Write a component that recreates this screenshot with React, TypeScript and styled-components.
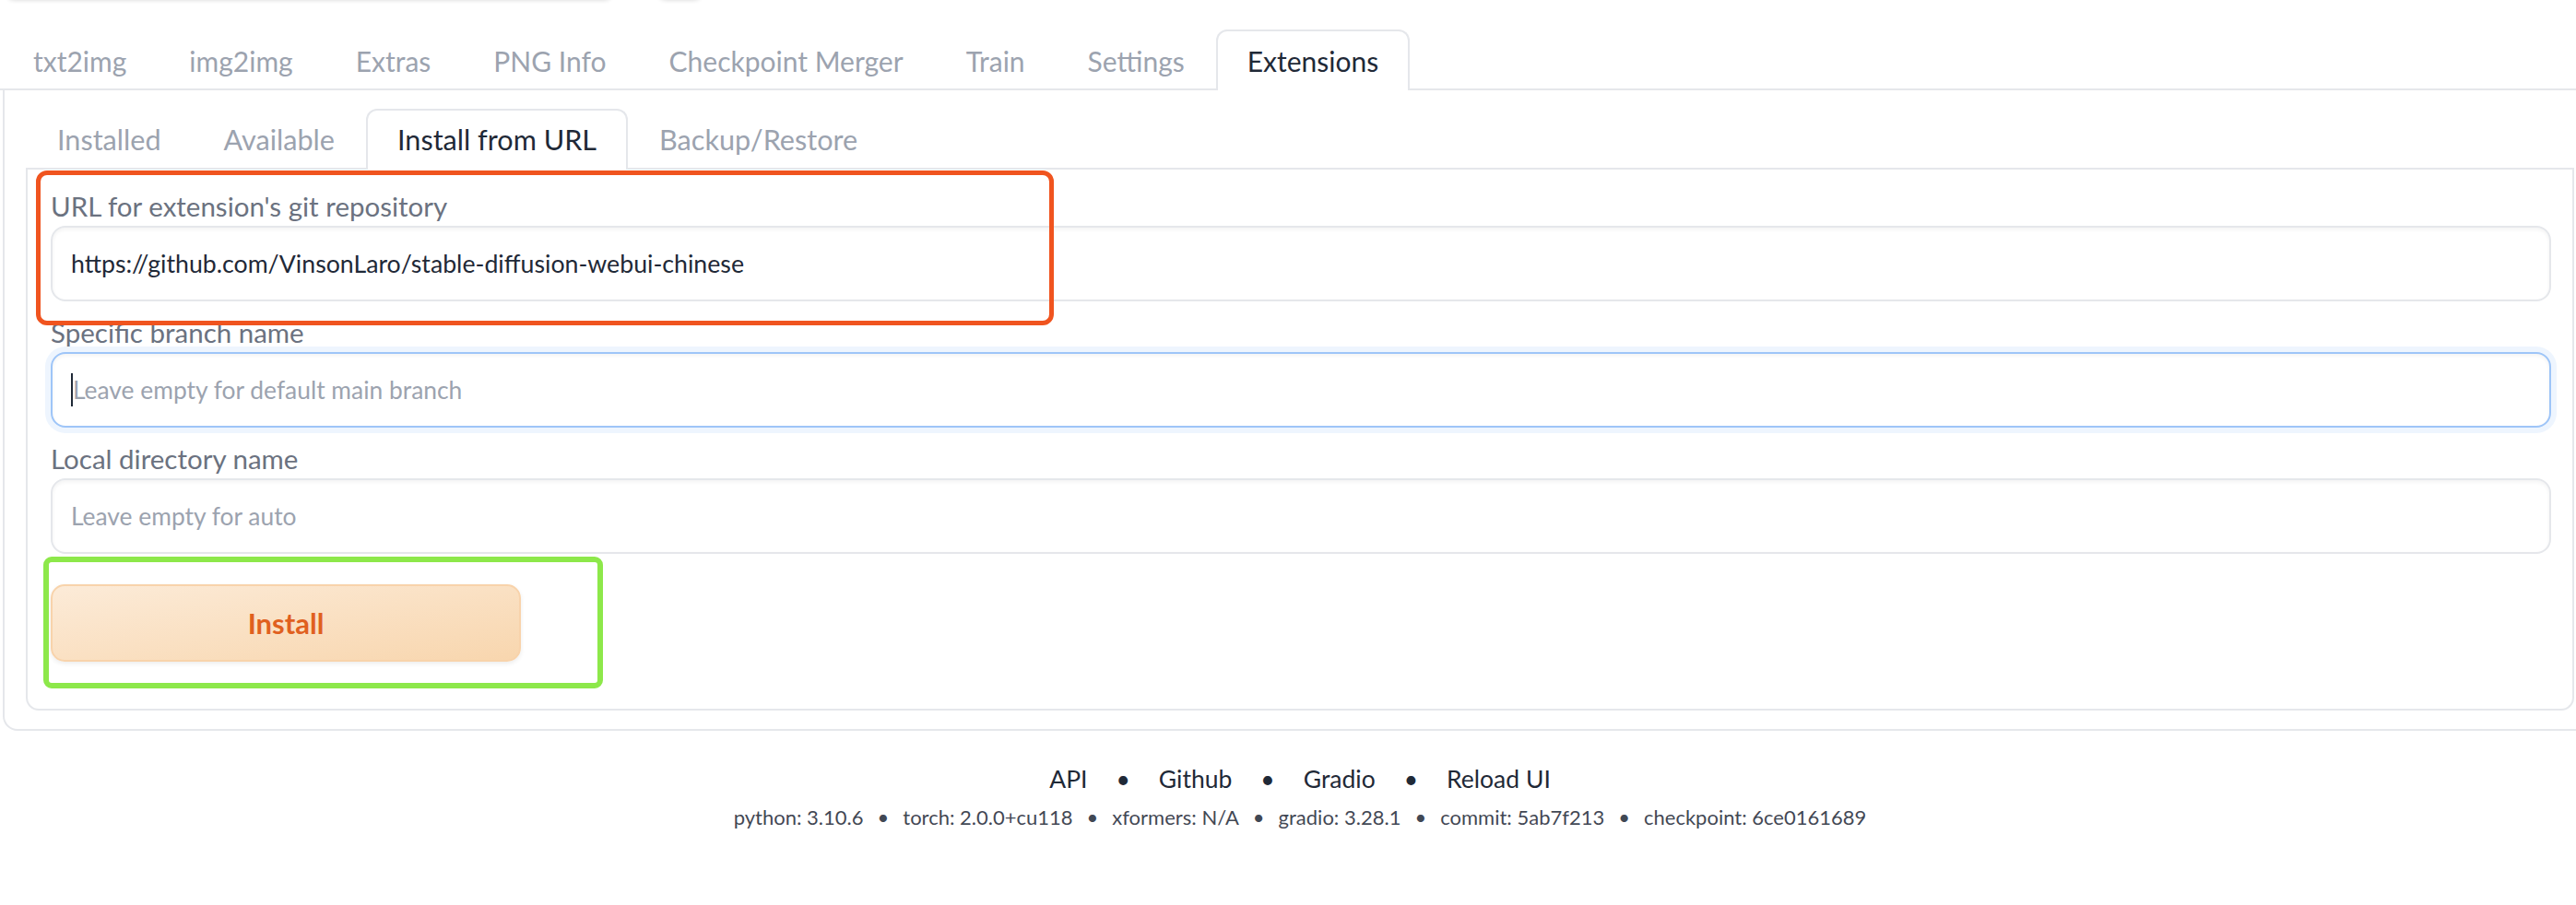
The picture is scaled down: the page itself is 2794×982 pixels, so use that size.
import React from "react";
import styled, { createGlobalStyle } from "styled-components";

const GlobalStyle = createGlobalStyle`
  html, body { margin: 0; padding: 0; background: #ffffff; overflow: hidden; }
  body { font-family: Lato, "Noto Sans", sans-serif; }
  * { box-sizing: border-box; }
`;

const Page = styled.div`
  position: relative;
  display: flow-root;
  width: 2820px;
  height: 982px;
`;

const TopRow = styled.div`
  display: flex;
  gap: 46px;
  height: 40px;
  margin-top: -40px;
  padding-left: 5px;
`;

const TopStub = styled.div<{ $w: number }>`
  width: ${(p) => p.$w}px;
  height: 40px;
  background: #ffffff;
  border-radius: 0 0 12px 12px;
  box-shadow: 0 1px 4px rgba(0, 0, 0, 0.12);
`;

const TabNav = styled.div<{ $top: number; $indent: number }>`
  display: flex;
  margin-top: ${(p) => p.$top}px;
  padding-left: ${(p) => p.$indent}px;
  border-bottom: 2px solid #e5e7eb;
  height: 66px;
`;

const Tab = styled.button<{ $active?: boolean; $size: number }>`
  height: 66px;
  padding: 0 32px;
  margin: 0;
  border: 2px solid ${(p) => (p.$active ? "#e5e7eb" : "transparent")};
  border-bottom: none;
  border-radius: 12px 12px 0 0;
  background: ${(p) => (p.$active ? "#ffffff" : "transparent")};
  color: ${(p) => (p.$active ? "#1f2937" : "#9ca3af")};
  font-family: inherit;
  font-size: ${(p) => p.$size}px;
  line-height: 1;
  white-space: nowrap;
  cursor: pointer;
`;

const OuterPanel = styled.div`
  margin: 0 2px 0 3px;
  border: 2px solid #e5e7eb;
  border-top: none;
  border-radius: 0 0 16px 16px;
  padding: 20px 24px 20px 23px;
`;

const InnerPanel = styled.div`
  border: 2px solid #e5e7eb;
  border-top: none;
  border-radius: 0 0 14px 14px;
  padding: 23px 23px 51px 25px;
`;

const Form = styled.div`
  display: flex;
  flex-direction: column;
  gap: 17px;
`;

const Field = styled.div`
  display: flex;
  flex-direction: column;
`;

const Label = styled.div`
  font-size: 29.5px;
  line-height: 34px;
  height: 34px;
  color: #6b7280;
  margin-bottom: 4px;
  white-space: nowrap;
`;

const InputBox = styled.div<{ $focused?: boolean }>`
  display: flex;
  align-items: center;
  height: 82px;
  padding: 0 20px;
  border: 2px solid ${(p) => (p.$focused ? "#9ec5f8" : "#e5e7eb")};
  border-radius: 16px;
  background: #ffffff;
  box-shadow: ${(p) =>
    p.$focused
      ? "0 0 0 6px #eef5fe, inset 0 2px 4px rgba(0,0,0,0.05)"
      : "inset 0 2px 4px rgba(0,0,0,0.05)"};
  font-size: 26.7px;
  color: #1f2937;
  white-space: nowrap;
`;

const Placeholder = styled.span`
  color: #9ca3af;
  font-size: 26.4px;
`;

const Caret = styled.span`
  display: inline-block;
  width: 2px;
  height: 36px;
  background: #1f2937;
`;

const InstallButton = styled.button`
  display: block;
  margin-top: 33px;
  width: 510px;
  height: 84px;
  border: 2px solid #f8d3ab;
  border-radius: 15px;
  background: linear-gradient(to bottom right, #fcebd8, #f8d6ae);
  box-shadow: 0 2px 5px rgba(0, 0, 0, 0.08);
  color: #e0601f;
  font-family: inherit;
  font-size: 31px;
  font-weight: 700;
  cursor: pointer;
`;

const Footer = styled.div`
  margin-top: 32px;
  text-align: center;
`;

const FooterLinks = styled.div`
  font-size: 26.5px;
  line-height: 40px;
  color: #1f2937;
`;

const Versions = styled.div`
  margin-top: 4px;
  font-size: 22px;
  line-height: 36px;
  color: #1f2937;
  opacity: 0.85;
`;

const Dot = styled.span<{ $gap: number }>`
  margin: 0 ${(p) => p.$gap}px;
`;

const Annotation = styled.div<{ $color: string; $w: number; $r: number }>`
  position: absolute;
  border: ${(p) => p.$w}px solid ${(p) => p.$color};
  border-radius: ${(p) => p.$r}px;
  pointer-events: none;
`;

const mainTabs = ["txt2img", "img2img", "Extras", "PNG Info", "Checkpoint Merger", "Train", "Settings", "Extensions"];
const subTabs = ["Installed", "Available", "Install from URL", "Backup/Restore"];
const links = ["API", "Github", "Gradio", "Reload UI"];
const versions = [
  "python: 3.10.6",
  "torch: 2.0.0+cu118",
  "xformers: N/A",
  "gradio: 3.28.1",
  "commit: 5ab7f213",
  "checkpoint: 6ce0161689",
];

function joinWithDots(items: string[], gap: number) {
  return items.map((t, i) => (
    <React.Fragment key={t}>
      {i > 0 && <Dot $gap={gap}>•</Dot>}
      <span>{t}</span>
    </React.Fragment>
  ));
}

export default function App() {
  return (
    <Page>
      <GlobalStyle />
      <TopRow>
        <TopStub $w={661} />
        <TopStub $w={51} />
      </TopRow>
      <TabNav $top={32} $indent={2}>
        {mainTabs.map((t) => (
          <Tab key={t} $size={30} $active={t === "Extensions"}>
            {t}
          </Tab>
        ))}
      </TabNav>
      <OuterPanel>
        <TabNav $top={0} $indent={0}>
          {subTabs.map((t) => (
            <Tab key={t} $size={30.6} $active={t === "Install from URL"}>
              {t}
            </Tab>
          ))}
        </TabNav>
        <InnerPanel>
          <Form>
            <Field>
              <Label>URL for extension's git repository</Label>
              <InputBox>https://github.com/VinsonLaro/stable-diffusion-webui-chinese</InputBox>
            </Field>
            <Field>
              <Label>Specific branch name</Label>
              <InputBox $focused>
                <Caret />
                <Placeholder>Leave empty for default main branch</Placeholder>
              </InputBox>
            </Field>
            <Field>
              <Label>Local directory name</Label>
              <InputBox>
                <Placeholder>Leave empty for auto</Placeholder>
              </InputBox>
            </Field>
          </Form>
          <InstallButton>Install</InstallButton>
        </InnerPanel>
      </OuterPanel>
      <Footer>
        <FooterLinks>{joinWithDots(links, 31)}</FooterLinks>
        <Versions>{joinWithDots(versions, 15)}</Versions>
      </Footer>
      <Annotation $color="#f0541f" $w={5} $r={12} style={{ left: 39, top: 185, width: 1104, height: 168 }} />
      <Annotation $color="#8de84a" $w={6} $r={9} style={{ left: 47, top: 604, width: 607, height: 143 }} />
    </Page>
  );
}
